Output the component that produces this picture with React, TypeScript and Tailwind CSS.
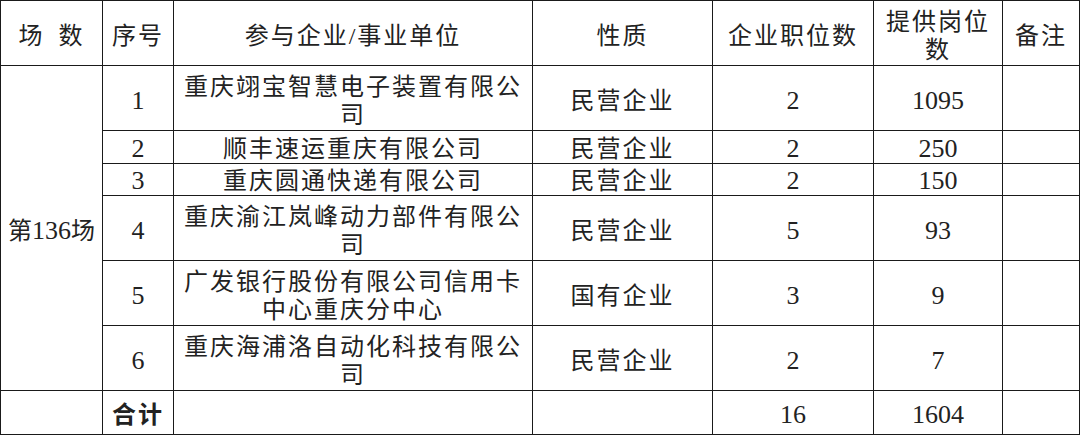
const rows = [
  { no: "1", name: "重庆翊宝智慧电子装置有限公司", kind: "民营企业", jobs: "2", posts: "1095", h: "h-[65px]", pad: "pt-[5px]" },
  { no: "2", name: "顺丰速运重庆有限公司", kind: "民营企业", jobs: "2", posts: "250", h: "h-[33px]", pad: "pt-[3px]" },
  { no: "3", name: "重庆圆通快递有限公司", kind: "民营企业", jobs: "2", posts: "150", h: "h-[32px]", pad: "pt-[3px]" },
  { no: "4", name: "重庆渝江岚峰动力部件有限公司", kind: "民营企业", jobs: "5", posts: "93", h: "h-[65px]", pad: "pt-[5px]" },
  { no: "5", name: "广发银行股份有限公司信用卡中心重庆分中心", kind: "国有企业", jobs: "3", posts: "9", h: "h-[65px]", pad: "pt-[5px]" },
  { no: "6", name: "重庆海浦洛自动化科技有限公司", kind: "民营企业", jobs: "2", posts: "7", h: "h-[65px]", pad: "pt-[5px]" },
];

const base = "border border-[#1a1a1a] text-center align-middle px-0 pb-0";
const cell = base + " tracking-[2px]";
const num = base + " text-[26px]";

export default function App() {
  return (
    <div className="w-[1080px] h-[435px] bg-white overflow-hidden">
      <table
        className="table-fixed border-collapse w-[1079px] text-[24px] leading-[28px] text-[#222]"
        style={{ fontFamily: '"Liberation Serif", "Noto Sans CJK SC", serif' }}
      >
        <colgroup>
          <col className="w-[102px]" />
          <col className="w-[71px]" />
          <col className="w-[359px]" />
          <col className="w-[180px]" />
          <col className="w-[161px]" />
          <col className="w-[129px]" />
          <col className="w-[77px]" />
        </colgroup>
        <tbody>
          <tr className="h-[65px]">
            <td className={cell + " pt-[5px]"}>场{"\u2002"}数</td>
            <td className={cell + " pt-[5px]"}>序号</td>
            <td className={cell + " pt-[5px]"}>参与企业/事业单位</td>
            <td className={cell + " pt-[5px]"}>性质</td>
            <td className={cell + " pt-[5px]"}>企业职位数</td>
            <td className={cell + " pt-[5px] px-3"}>提供岗位数</td>
            <td className={cell + " pt-[5px]"}>备注</td>
          </tr>
          {rows.map((r, i) => (
            <tr key={r.no} className={r.h}>
              {i === 0 && (
                <td rowSpan={6} className={base + " pt-[5px]"}>
                  第<span className="text-[26px]">136</span>场
                </td>
              )}
              <td className={num + " " + r.pad}>{r.no}</td>
              <td className={cell + " px-2 " + r.pad}>{r.name}</td>
              <td className={cell + " " + r.pad}>{r.kind}</td>
              <td className={num + " " + r.pad}>{r.jobs}</td>
              <td className={num + " " + r.pad}>{r.posts}</td>
              <td className={cell + " " + r.pad}></td>
            </tr>
          ))}
          <tr className="h-[44px]">
            <td className={cell}></td>
            <td className={cell + " pt-[5px] font-bold"}>合计</td>
            <td className={cell}></td>
            <td className={cell}></td>
            <td className={num + " pt-[5px]"}>16</td>
            <td className={num + " pt-[5px]"}>1604</td>
            <td className={cell}></td>
          </tr>
        </tbody>
      </table>
    </div>
  );
}
